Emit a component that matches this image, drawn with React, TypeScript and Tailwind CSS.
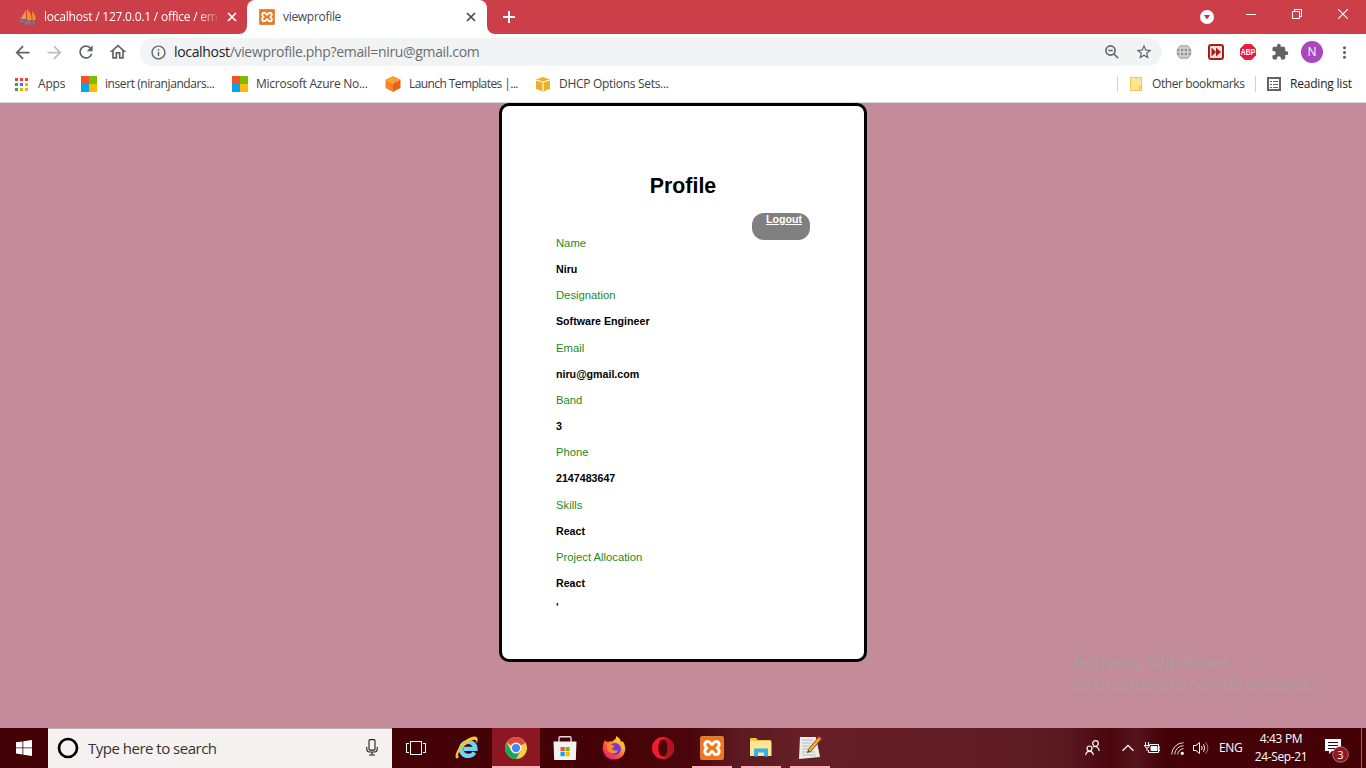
import React from "react";
import {
  MdArrowBack,
  MdArrowForward,
  MdRefresh,
  MdOutlineHome,
  MdInfoOutline,
  MdZoomOut,
  MdStarOutline,
  MdExtension,
  MdMoreVert,
} from "react-icons/md";

const profile = [
  { label: "Name", value: "Niru" },
  { label: "Designation", value: "Software Engineer" },
  { label: "Email", value: "niru@gmail.com" },
  { label: "Band", value: "3" },
  { label: "Phone", value: "2147483647" },
  { label: "Skills", value: "React" },
  { label: "Project Allocation", value: "React" },
];

function Slot({ className = "", children }: { className?: string; children?: React.ReactNode }) {
  return <div className={`flex shrink-0 items-center justify-center ${className}`}>{children}</div>;
}

function Cross({ size, width, color }: { size: number; width: number; color: string }) {
  return (
    <svg width={size} height={size} viewBox="0 0 10 10" stroke={color} strokeWidth={width}>
      <path d="M1 1L9 9M9 1L1 9" />
    </svg>
  );
}

function Xampp({ size }: { size: number }) {
  return (
    <svg width={size} height={size} viewBox="0 0 24 24">
      <rect x=".5" y=".5" width="23" height="23" rx="1.500" fill="#f0761c" stroke="#d9823f" />
      <path
        d="M8 5.500C4 5.500 4 10.500 7 12C4 13.500 4 18.500 8 18.500C11 18.500 10 15.500 12 15.500C14 15.500 13 18.500 16 18.500C20 18.500 20 13.500 17 12C20 10.500 20 5.500 16 5.500C13 5.500 14 8.500 12 8.500C10 8.500 11 5.500 8 5.500z"
        fill="none"
        stroke="#fff"
        strokeWidth="2.900"
        strokeLinejoin="round"
      />
    </svg>
  );
}

function MicrosoftLogo() {
  return (
    <svg width="16" height="16" viewBox="0 0 16 16" shapeRendering="crispEdges">
      <path fill="#f35325" d="M0 0h7.5v7.5H0z" />
      <path fill="#80bb03" d="M8 0h7.5v7.5H8z" />
      <path fill="#05a5f0" d="M0 8h7.5v7.5H0z" />
      <path fill="#ffba08" d="M8 8h7.5v7.5H8z" />
    </svg>
  );
}

function TabStrip() {
  return (
    <div className="flex h-[34px] bg-[#cc3f48]">
      <div className="flex h-full w-[247px] items-center pl-[19px]">
        <svg width="18" height="16" viewBox="0 0 18 16">
          <path d="M7 1L1.500 10H7z" fill="#d99a70" />
          <path d="M8 0Q13 5 12.500 11H8z" fill="#f7931e" />
          <path d="M13 2Q17 6 16.500 11H13.500z" fill="#f7931e" />
          <text x="0.500" y="15.700" fontSize="7.500" fontWeight="700" fontStyle="italic" fontFamily="Liberation Sans" fill="#3d4266" stroke="#c9bccb" strokeWidth="0.250">PMA</text>
        </svg>
        <div className="ml-[7px] w-[176px] overflow-hidden whitespace-nowrap text-[12px] leading-[16px] tracking-[-0.22px] text-white [mask-image:linear-gradient(to_right,black_155px,transparent_176px)]">
          localhost / 127.0.0.1 / office / em
        </div>
        <Slot className="ml-[7px] w-[10px]"><Cross size={10} width={1.7} color="#fff" /></Slot>
      </div>
      <div className="relative flex h-full w-[240px] items-center rounded-t-[8px] bg-white pl-[12px]">
        <svg className="absolute bottom-0 -left-[8px]" width="8" height="8"><path d="M8 0V8H0A8 8 0 0 0 8 0z" fill="#fff" /></svg>
        <svg className="absolute bottom-0 -right-[8px]" width="8" height="8"><path d="M0 0V8H8A8 8 0 0 1 0 0z" fill="#fff" /></svg>
        <Xampp size={16} />
        <div className="ml-[8px] w-[183px] whitespace-nowrap text-[12px] leading-[16px] tracking-[-0.3px] text-[#45494d]">viewprofile</div>
        <Slot className="w-[10px]"><Cross size={10} width={1.7} color="#45494d" /></Slot>
      </div>
      <Slot className="ml-[15px] w-[13px]">
        <svg width="12" height="12" stroke="#fff" strokeWidth="2"><path d="M6 0V12M0 6H12" /></svg>
      </Slot>
      <div className="ml-auto flex h-full items-start">
        <svg className="mt-[10px] mr-[32px]" width="14" height="14" viewBox="0 0 14 14"><circle cx="7" cy="7" r="7" fill="#fff" /><path d="M4 5h6L7 9.500z" fill="#bb3440" /></svg>
        <svg className="mt-[9px] mr-[36px]" width="10" height="11" shapeRendering="crispEdges"><path d="M0 5.500H10" stroke="#fff" /></svg>
        <svg className="mt-[9px] mr-[36px]" width="10" height="10" fill="none" stroke="#fff" shapeRendering="crispEdges"><path d="M.5 2.500h7v7h-7zM2.500 2.500v-2h7v7h-2" /></svg>
        <div className="mt-[9px] mr-[18px]"><svg width="10" height="10" stroke="#fff" strokeWidth="1.100"><path d="M0 0L10 10M10 0L0 10" /></svg></div>
      </div>
    </div>
  );
}

function Toolbar() {
  return (
    <div className="flex h-[36px] items-center bg-white pl-[6px] text-[#5f6368]">
      <Slot className="w-[32px]"><MdArrowBack size={21} /></Slot>
      <Slot className="w-[32px] text-[#bcbec1]"><MdArrowForward size={21} /></Slot>
      <Slot className="w-[32px]"><MdRefresh size={20} /></Slot>
      <Slot className="w-[32px]"><MdOutlineHome size={20} /></Slot>
      <div className="ml-[6px] flex h-[28px] w-[1022px] items-center rounded-full bg-[#f1f3f4]">
        <Slot className="w-[36px]"><MdInfoOutline size={17} /></Slot>
        <div className="-ml-[2px] whitespace-nowrap text-[14px] leading-[20px] tracking-[-0.330px] text-[#696d71]">
          <span className="text-[#202124]">localhost</span>/viewprofile.php?email=niru@gmail.com
        </div>
        <Slot className="ml-auto w-[32px]">
          <svg width="14" height="14" fill="none" stroke="#5f6368" strokeWidth="1.600"><circle cx="5.500" cy="5.500" r="4.600" /><path d="M9 9L13.200 13.200M3.300 5.500H7.700" /></svg>
        </Slot>
        <Slot className="mr-[2px] w-[32px]"><MdStarOutline size={18} /></Slot>
      </div>
      <Slot className="ml-[6px] w-[32px]">
        <svg width="16" height="16" viewBox="0 0 16 16"><circle cx="8" cy="8" r="7.500" fill="#999" /><path d="M8 0V16M0 8H16M1.500 4H14.500M1.500 12H14.500" stroke="#eee" strokeWidth=".9" /><ellipse cx="8" cy="8" rx="4" ry="7.500" fill="none" stroke="#eee" strokeWidth=".9" /></svg>
      </Slot>
      <Slot className="w-[32px]">
        <svg width="16" height="16" viewBox="0 0 16 16"><rect width="16" height="16" rx="3" fill="#a81c1c" /><rect x="2" y="2" width="12" height="12" rx="1" fill="#f5dfdf" /><path d="M3.500 3.500L8 8L3.500 12.500zM8 3.500L13 8L8 12.500z" fill="#a81c1c" /></svg>
      </Slot>
      <Slot className="w-[32px]">
        <svg width="16" height="16" viewBox="0 0 16 16"><path d="M4.700 0h6.600L16 4.700v6.600L11.300 16H4.700L0 11.300V4.700z" fill="#ed1941" /><text x="8" y="11" textAnchor="middle" fontSize="8.200" textLength="14.500" lengthAdjust="spacingAndGlyphs" fontWeight="700" fontFamily="Liberation Sans" fill="#fff">ABP</text></svg>
      </Slot>
      <Slot className="w-[32px]"><MdExtension size={18} /></Slot>
      <Slot className="w-[32px]"><div className="flex size-[22px] items-center justify-center rounded-full bg-[#ab47bc] text-[12px] leading-none text-white">N</div></Slot>
      <Slot className="w-[32px]"><MdMoreVert size={19} /></Slot>
    </div>
  );
}

function Bookmarks() {
  const text = "whitespace-nowrap text-[12px] leading-[16px] text-[#3c4043]";
  return (
    <div className="flex h-[33px] items-center border-b border-[#d5d9de] bg-white pb-[4px] pl-[15px]">
      <svg width="13" height="13" shapeRendering="crispEdges">
        <path fill="#ea4335" d="M0 0h3v3H0zM5 0h3v3H5zM10 0h3v3h-3z" />
        <path fill="#34a853" d="M0 5h3v3H0zM0 10h3v3H0z" />
        <path fill="#1a86f0" d="M5 5h3v3H5z" />
        <path fill="#f9ab00" d="M10 5h3v3h-3zM5 10h3v3H5zM10 10h3v3h-3z" />
      </svg>
      <div className={`${text} ml-[10px] w-[43px] tracking-[-0.2px]`}>Apps</div>
      <MicrosoftLogo />
      <div className={`${text} ml-[8px] w-[127px] tracking-[-0.420px]`}>insert (niranjandars...</div>
      <MicrosoftLogo />
      <div className={`${text} ml-[8px] w-[129px] tracking-[-0.260px]`}>Microsoft Azure No...</div>
      <svg width="16" height="16" viewBox="0 0 16 16"><path d="M8 0l7.500 3.500L8 7.500.5 3.500z" fill="#fba130" /><path d="M.5 3.500L8 7.500V16L.5 12z" fill="#f88525" /><path d="M15.500 3.500L8 7.500V16l7.500-4z" fill="#ec6118" /></svg>
      <div className={`${text} ml-[8px] w-[126px] tracking-[-0.590px]`}>Launch Templates |...</div>
      <svg width="16" height="16" viewBox="0 0 16 16"><path d="M8 1l7 2.500v9.500L8 15.500 1 13V3.500z" fill="#efae28" /><path d="M1 4l7 2 7-2M8 6v9.500" fill="none" stroke="#fff" strokeWidth="1.100" /></svg>
      <div className={`${text} ml-[8px] tracking-[-0.3px]`}>DHCP Options Sets...</div>
      <div className="ml-auto h-[16px] w-px bg-[#cfd1d4]" />
      <svg className="ml-[12px]" width="13" height="14" shapeRendering="crispEdges"><path d="M.5.500h11v13H.5z" fill="#ffe58f" stroke="#eccb52" /><path d="M9.500 9.500v4h2v-4z" fill="#ffe58f" stroke="#e8c243" /></svg>
      <div className={`${text} ml-[9px] w-[103px] tracking-[-0.4px]`}>Other bookmarks</div>
      <div className="h-[16px] w-px bg-[#cfd1d4]" />
      <svg className="ml-[11px]" width="14" height="14" shapeRendering="crispEdges" fill="none" stroke="#5f6368"><rect x="1" y="1" width="12" height="12" strokeWidth="1.600" /><path d="M3 4.500h2M6 4.500h5M3 7.500h2M6 7.500h5M3 10.500h2M6 10.500h5" /></svg>
      <div className="ml-[9px] w-[76px] whitespace-nowrap text-[12px] leading-[16px] tracking-[-0.210px] text-[#202124]">Reading list</div>
    </div>
  );
}

function ProfilePage() {
  return (
    <div className="relative flex h-[625px] justify-center bg-[#c48c9b] font-['Liberation_Sans',Arial,sans-serif]">
      <div className="flex h-[559px] w-[368px] flex-col rounded-[10px] border-[3px] border-black bg-white px-[54px] pt-[68px] text-[10.667px] text-black">
        <h1 className="text-center text-[21.33px] leading-[24px] font-bold">Profile</h1>
        <div className="mt-[15px] ml-auto h-[27px] w-[58px] rounded-[12px] bg-[#808080] pr-[8px] text-right leading-[12px] font-bold text-white underline">Logout</div>
        <div className="-mt-[10px] flex flex-col">
          {profile.map((item) => (
            <React.Fragment key={item.label}>
              <div className="h-[26.170px] text-[11.250px] leading-[26px] text-[#228b22]">{item.label}</div>
              <div className="h-[26.170px] leading-[26px] font-bold">{item.value}</div>
            </React.Fragment>
          ))}
        </div>
        <div className="mt-[5px] leading-[12px] font-bold">'</div>
      </div>
      <div className="absolute top-[547px] left-[1073px] whitespace-nowrap font-['Open_Sans',sans-serif] text-[#ab9ca0]">
        <div className="text-[19px] leading-[24px]">Activate Windows</div>
        <div className="text-[14px] leading-[21px] tracking-[0.3px]">Go to Settings to activate Windows.</div>
      </div>
    </div>
  );
}

function TaskButton({ open, children }: { open?: boolean; children: React.ReactNode }) {
  return (
    <div className="flex h-full w-[49px] shrink-0 flex-col items-center">
      <div className="flex h-[38px] items-center justify-center pt-[2px]">{children}</div>
      {open && <div className="h-[2px] w-[40px] bg-[#ffb0b9]" />}
    </div>
  );
}

function Taskbar() {
  return (
    <div className="flex h-[40px] items-center overflow-hidden bg-[linear-gradient(to_right,#440206_0px,#440206_600px,#4a060c_690px,#5c1a21_740px,#651f27_800px,#621e26_960px,#5b1a22_1060px,#4a070d_1110px,#57131c_1135px,#440206_1165px,#440206_1366px)] text-white">
      <Slot className="w-[48px]">
        <svg width="16" height="16" viewBox="0 0 16 16" fill="#fff"><path d="M0 2.300L6.500 1.400V7.500H0zM7.300 1.300L16 0V7.500H7.300zM0 8.300H6.500V14.500L0 13.600zM7.300 8.300H16V16L7.300 14.700z" /></svg>
      </Slot>
      <div className="flex h-full w-[344px] items-center border-t border-[#b9b1b1] bg-[#f5f1f0] pb-[2px]">
        <Slot className="ml-[9px] w-[22px]"><svg width="22" height="22"><circle cx="11" cy="11" r="9" fill="none" stroke="#000" strokeWidth="2.700" /></svg></Slot>
        <div className="ml-[9px] whitespace-nowrap text-[15px] leading-[20px] tracking-[-0.5px] text-[#333]">Type here to search</div>
        <svg className="mr-[14px] ml-auto" width="12" height="17" fill="none" stroke="#222" strokeWidth="1.100"><rect x="3" y=".6" width="6" height="10.500" rx="1" /><path d="M.8 8v2.500Q1 13 3.500 13h5Q11 13 11.200 10.500V8M6 13v3M3 16h6" /></svg>
      </div>
      <Slot className="w-[48px]">
        <svg width="20" height="14" fill="none" stroke="#fff" shapeRendering="crispEdges"><path d="M4.500.500h11v13h-11zM3 2.500H.5v9H3M17 2.500h2.500v9H17" /></svg>
      </Slot>
      <Slot className="ml-[2px] w-[50px]">
        <svg width="24" height="24" viewBox="0 0 24 24"><path d="M19.500 16.500A7.300 7 0 1 1 20.500 12.800H8.500" fill="none" stroke="#6fd2f7" strokeWidth="4.300" /><path d="M4 21C-1 26-.5 17 5 10C11 2 21-2 22.500 2.500C23 4 22.500 6 21.500 8C22 4 20 3 16.500 4.500C9 8 0 19 4 21z" fill="#f5c52c" /></svg>
      </Slot>
      <div className="flex h-full w-[48px] flex-col bg-[#8a1721]">
        <div className="flex h-[38px] items-center justify-center pt-[2px]">
          <svg width="22" height="22" viewBox="0 0 48 48"><circle cx="24" cy="24" r="24" fill="#ffcd40" /><path d="M24 24L3.200 12A24 24 0 0 1 44.800 12z" fill="#dd4b3f" /><path d="M24 12H45L24 24z" fill="#dd4b3f" /><path d="M3.200 12A24 24 0 0 0 24 48L34.400 30L24 24L13.600 30z" fill="#1da462" /><circle cx="24" cy="24" r="12" fill="#f5f5f5" /><circle cx="24" cy="24" r="9" fill="#4688f1" /></svg>
        </div>
        <div className="h-[2px] bg-[#ffb0b9]" />
      </div>
      <TaskButton>
        <svg width="24" height="24" viewBox="0 0 24 24"><path d="M6 6V1.500Q6 .7 7 .7H17Q18 .7 18 1.500V6" fill="none" stroke="#ddd" strokeWidth="1.400" /><path d="M.5 5.500h23L22.800 24H1.200z" fill="#f2f2f2" /><path fill="#f35325" d="M7.500 11h4.200v4.200H7.500z" /><path fill="#81bc06" d="M12.500 11h4.200v4.200h-4.200z" /><path fill="#05a6f0" d="M7.500 16h4.200v4.200H7.500z" /><path fill="#ffba08" d="M12.500 16h4.200v4.200h-4.200z" /></svg>
      </TaskButton>
      <TaskButton>
        <svg width="24" height="24" viewBox="0 0 24 24">
          <defs><linearGradient id="fox" x1="1" y1="0" x2="0.200" y2="1"><stop offset="0" stopColor="#fff44f" /><stop offset=".35" stopColor="#ffb02e" /><stop offset=".65" stopColor="#ff5634" /><stop offset="1" stopColor="#e31587" /></linearGradient></defs>
          <path d="M3 4Q4 6 6 6Q8 5 10 5.500L12 4Q14 3 14.500 0Q18 2 19 6L20.500 5Q24 10 23 15Q21 23.500 12 23.500Q2 23 .6 13Q.5 8 3 4z" fill="url(#fox)" />
          <circle cx="13" cy="13" r="6" fill="#7139dc" /><path d="M5 8Q8 7 10 9L13 10Q11 11.500 10 13Q12 15.500 16 14Q14 19 9 17Q4 15 5 8z" fill="#ff8a22" />
        </svg>
      </TaskButton>
      <TaskButton>
        <svg width="22" height="22" viewBox="0 0 22 22"><path fillRule="evenodd" d="M11 0a11 11 0 1 0 0 22a11 11 0 1 0 0-22zM11 2.500c3 0 4.700 3.800 4.700 8.500s-1.700 8.500-4.700 8.500S6.300 15.700 6.300 11S8 2.500 11 2.500z" fill="#f51a2d" /><path d="M11 2.500c3 0 4.700 3.800 4.700 8.500s-1.700 8.500-4.700 8.500c3 1.800 6 1.500 8-1c4-4 4-11 0-15c-2-2.300-5-2.800-8-1z" fill="#b51220" /></svg>
      </TaskButton>
      <TaskButton open><Xampp size={24} /></TaskButton>
      <TaskButton open>
        <svg width="22" height="20" viewBox="0 0 22 20"><path d="M0 1Q0 0 1 0H6L8 2H20Q21 2 21 3V18H0z" fill="#f4c443" /><path d="M1 3H20Q21.500 3 21.500 4V18H0V4z" fill="#ffe694" /><path d="M4 10.500H18V18.500H14V14.500H8V18.500H4z" fill="#32b0e8" /></svg>
      </TaskButton>
      <TaskButton open>
        <svg width="24" height="24" viewBox="0 0 24 24"><path d="M2 1H18L22 21L1 23z" fill="#ecece8" /><path d="M4 4h11M4 7h10M4 10h8M4 13h7M4 16h13M4 19h14" stroke="#b7bbba" /><path d="M22 2L11 15" stroke="#7d4d16" strokeWidth="4" /><path d="M22 2L11 15" stroke="#f3b22e" strokeWidth="2.500" /><path d="M10 14L9 17L12 16z" fill="#333" /><path d="M20.500 1L23 3" stroke="#d95a4f" strokeWidth="2" /></svg>
      </TaskButton>
      <div className="ml-auto flex h-full items-center">
        <svg className="mr-[22px]" width="15" height="16" fill="none" stroke="#fff" strokeWidth="1.200"><circle cx="10.500" cy="3.500" r="2.800" /><circle cx="4.500" cy="8.500" r="2.500" /><path d="M.7 15Q1 11.300 4.500 11.300T8.300 15M8 7Q10 6 12 7Q14 8 14.200 11" /></svg>
        <svg className="mr-[10px]" width="12" height="8" fill="none" stroke="#fff" strokeWidth="1.300"><path d="M.5 6.800L6 1.300L11.500 6.800" /></svg>
        <svg className="mr-[11px]" width="16" height="12" fill="none" stroke="#fff"><path d="M5.500 2.500H14.500V10.500H4.500V8" /><path d="M14.500 5H16V8.500H14.500" /><path d="M7 4.500h6v4H7z" fill="#fff" /><path d="M1.500 0V3M4.500 0V3M0 3.500H6M.8 3.500Q1 6 3 6T5.300 3.500M3 6V9" /></svg>
        <svg className="mr-[9px]" width="13" height="13" fill="none" stroke="#fff"><path d="M.7 12.500A12 12 0 0 1 12.500.700M3.700 12.500A9 9 0 0 1 12.500 3.700M6.700 12.500A6 6 0 0 1 12.500 6.700" opacity=".85" /><circle cx="11.300" cy="11.300" r="1.600" fill="#fff" stroke="none" /></svg>
        <svg className="mr-[10px]" width="16" height="14" fill="none" stroke="#fff"><path d="M.5 4.500H3L6.500 1.500V12.500L3 9.500H.5z" /><path d="M8.500 5Q10 7 8.500 9M10.500 3.300Q13 7 10.500 10.700" /><path d="M12.700 1.500Q17 7 12.700 12.500" opacity=".5" /></svg>
        <div className="w-[35px] text-[12px] leading-[16px] tracking-[-0.350px]">ENG</div>
        <div className="flex w-[54px] flex-col items-center text-[12px] leading-[18px] tracking-[-0.350px] whitespace-nowrap"><span>4:43 PM</span><span>24-Sep-21</span></div>
        <svg className="mt-[6px] ml-[17px]" width="25" height="26" viewBox="0 0 25 26"><path d="M0 1H16V13H7L4 16V13H0z" fill="#fff" /><path d="M3 4.500h10M3 7.500h10M3 10.500h7" stroke="#440206" shapeRendering="crispEdges" /><circle cx="15.500" cy="16.500" r="7.800" fill="#921620" stroke="#b4707a" /><text x="15.500" y="20.500" textAnchor="middle" fontSize="11" fontFamily="Open Sans" fill="#fff">3</text></svg>
        <div className="ml-[11px] h-full w-px bg-[#8d686b]" />
        <div className="w-[4px]" />
      </div>
    </div>
  );
}

export default function App() {
  return (
    <div className="flex h-[768px] w-[1366px] flex-col overflow-hidden bg-white font-['Open_Sans',sans-serif]">
      <TabStrip />
      <Toolbar />
      <Bookmarks />
      <ProfilePage />
      <Taskbar />
    </div>
  );
}
